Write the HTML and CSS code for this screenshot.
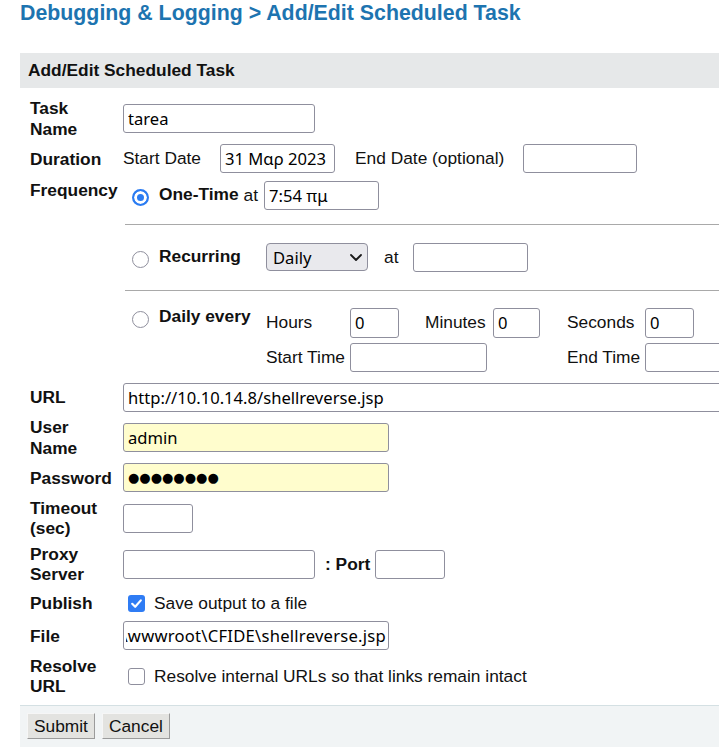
FILE: index.html
```html
<!DOCTYPE html>
<html lang="en">
<head>
<meta charset="utf-8">
<title>Add/Edit Scheduled Task</title>
<link rel="stylesheet" href="styles.css">
</head>
<body>
<div class="page">
  <h1 class="title">Debugging &amp; Logging &gt; Add/Edit Scheduled Task</h1>
  <div class="panel">
    <div class="panel-head">Add/Edit Scheduled Task</div>
    <form class="form">
      <div class="lbl">Task<br>Name</div>
      <div class="fld"><input class="in w192" type="text" value="tarea"></div>

      <div class="lbl">Duration</div>
      <div class="fld">
        <span>Start Date</span>
        <input class="in w115 ml19" type="text" value="31 Μαρ 2023">
        <span class="ml20">End Date (optional)</span>
        <input class="in w114 ml19" type="text" value="">
      </div>

      <div class="lbl top">Frequency</div>
      <div class="freq">
        <div class="onetime">
          <span class="opt"><input class="rd" type="radio" name="freq" checked><b>One-Time</b></span>
          <span class="ml5">at</span>
          <input class="in w115 ml6" type="text" value="7:54 πμ">
        </div>
        <div class="rule"></div>
        <div class="opt mid"><input class="rd" type="radio" name="freq"><b>Recurring</b></div>
        <div class="rec">
          <span class="sel">
            <select class="select"><option>Daily</option><option>Weekly</option><option>Monthly</option></select>
            <svg class="chev" viewBox="0 0 12 7" width="12" height="7"><path d="M1 1 L6 6 L11 1" fill="none" stroke="#1a1a1a" stroke-width="1.8" stroke-linecap="round" stroke-linejoin="round"/></svg>
          </span>
          <span class="ml16">at</span>
          <input class="in w115 ml15" type="text" value="">
        </div>
        <div class="rule r2"></div>
        <div class="opt first"><input class="rd" type="radio" name="freq"><b>Daily every</b></div>
        <div class="daily">
          <span>Hours</span>
          <input class="in w49" type="text" value="0">
          <span>Minutes</span>
          <input class="in w47" type="text" value="0">
          <span>Seconds</span>
          <input class="in w49" type="text" value="0">
          <span>Start Time</span>
          <input class="in w137 span3" type="text" value="">
          <span>End Time</span>
          <input class="in w140" type="text" value="">
        </div>
      </div>

      <div class="lbl">URL</div>
      <div class="fld"><input class="in w650" type="text" value="http://10.10.14.8/shellreverse.jsp"></div>

      <div class="lbl">User<br>Name</div>
      <div class="fld"><input class="in w266 yel" type="text" value="admin"></div>

      <div class="lbl">Password</div>
      <div class="fld"><input class="in w266 yel dots" type="text" value="●●●●●●●●"></div>

      <div class="lbl">Timeout<br>(sec)</div>
      <div class="fld"><input class="in w70" type="text" value=""></div>

      <div class="lbl">Proxy<br>Server</div>
      <div class="fld">
        <input class="in w192" type="text" value="">
        <b class="ml10">: Port</b>
        <input class="in w70 ml5" type="text" value="">
      </div>

      <div class="lbl">Publish</div>
      <div class="fld chk">
        <span class="cb on"><svg viewBox="0 0 17 17" width="17" height="17"><path d="M4.2 8.8 L7.2 11.8 L12.8 5.4" fill="none" stroke="#fff" stroke-width="2.2" stroke-linecap="round" stroke-linejoin="round"/></svg></span>
        <span class="ml9">Save output to a file</span>
      </div>

      <div class="lbl">File</div>
      <div class="fld"><input class="in w266 rtl" type="text" value="C:\ColdFusion8\wwwroot\CFIDE\shellreverse.jsp"></div>

      <div class="lbl">Resolve<br>URL</div>
      <div class="fld">
        <span class="cb"></span>
        <span class="ml9">Resolve internal URLs so that links remain intact</span>
      </div>
    </form>
    <div class="panel-foot">
      <button class="btn" type="button">Submit</button>
      <button class="btn" type="button">Cancel</button>
    </div>
  </div>
</div>
</body>
</html>
```
FILE: styles.css
```css
html, body {
  margin: 0;
  padding: 0;
  overflow: hidden;
  background: #fff;
}

body {
  font-family: "Liberation Sans", Arial, sans-serif;
  font-size: 17.33px;
  color: #111;
}

.page {
  width: 800px;
  padding-left: 20px;
}

.title {
  margin: 1px 0 0;
  font-size: 21.33px;
  line-height: 24px;
  font-weight: bold;
  color: #1d74b0;
}

.panel {
  margin-top: 28px;
  width: 780px;
}

.panel-head {
  height: 35px;
  line-height: 35px;
  padding-left: 8px;
  background: #e6e8e9;
  font-weight: bold;
}

.form {
  display: grid;
  grid-template-columns: 93px 1fr;
  row-gap: 5.25px;
  padding: 10px 0 8.5px 10px;
}

.lbl {
  font-weight: bold;
  line-height: 20.5px;
  align-self: center;
}

.lbl.top {
  align-self: start;
  margin-top: 1.5px;
}

.fld {
  display: flex;
  align-items: center;
  min-height: 29px;
  white-space: nowrap;
}

.fld.chk {
  min-height: 26px;
}

.in {
  box-sizing: border-box;
  height: 29px;
  padding: 0 4px;
  border: 1px solid #8f8f9d;
  border-radius: 3px;
  background: #fff;
  color: #000;
  font-family: "Noto Sans", sans-serif;
  font-size: 16.6px;
  outline: none;
}

.yel { background: #fffdcd; }
.dots { font-family: "DejaVu Sans", sans-serif; font-size: 13px; }
.rtl { direction: rtl; text-align: left; padding: 0 2px; letter-spacing: 0.25px; }

.w47 { width: 47px; }
.w49 { width: 49px; }
.w70 { width: 70px; }
.w114 { width: 114px; }
.w115 { width: 115px; }
.w137 { width: 137px; }
.w140 { width: 140px; }
.w192 { width: 192px; }
.w266 { width: 266px; }
.w650 { width: 650px; }

.ml5 { margin-left: 5px; }
.ml6 { margin-left: 6px; }
.ml9 { margin-left: 9px; }
.ml10 { margin-left: 10px; }
.ml15 { margin-left: 15px; }
.ml16 { margin-left: 16px; }
.ml19 { margin-left: 19px; }
.ml20 { margin-left: 20px; }

/* Frequency block */
.freq {
  display: grid;
  grid-template-columns: 143px 1fr;
  padding: 2px 0 6px;
}

.onetime {
  grid-column: 1 / -1;
  display: flex;
  align-items: center;
  height: 29px;
  white-space: nowrap;
}

.rule {
  grid-column: 1 / -1;
  height: 0;
  margin: 14px 0 18px 2px;
  border-top: 1px solid #a9a9a9;
}

.rule.r2 {
  margin-top: 18px;
  margin-bottom: 15px;
}

.opt {
  display: flex;
  align-items: flex-start;
  padding-left: 9px;
  line-height: 20.5px;
  white-space: nowrap;
}

.opt.mid { align-self: center; }
.opt.first { align-self: start; }

.rd {
  appearance: none;
  -webkit-appearance: none;
  box-sizing: border-box;
  width: 17px;
  height: 17px;
  margin: 5px 10px 0 0;
  border: 1.5px solid #8f8f9d;
  border-radius: 50%;
  background: #fff;
  flex: none;
}

.rd:checked {
  border: 2.5px solid #2b7cf2;
  background: #2b7cf2;
  box-shadow: inset 0 0 0 3px #fff;
}

.rec {
  display: flex;
  align-items: center;
  height: 29px;
  white-space: nowrap;
}

.sel {
  position: relative;
  display: inline-block;
  height: 28px;
}

.select {
  appearance: none;
  -webkit-appearance: none;
  box-sizing: border-box;
  width: 102px;
  height: 28px;
  margin: 0;
  padding: 0 6px;
  border: 1px solid #8f8f9d;
  border-radius: 4px;
  background: #e9e9ed;
  color: #000;
  font-family: "Noto Sans", sans-serif;
  font-size: 16.6px;
}

.chev {
  position: absolute;
  right: 6px;
  top: 11px;
  pointer-events: none;
}

.daily {
  display: grid;
  grid-template-columns: 84px 75px 68px 74px 78px 200px;
  row-gap: 5px;
  align-items: center;
  padding-top: 2px;
  white-space: nowrap;
}

.daily .in { justify-self: start; }
.daily .in.w49, .daily .in.w47 { height: 30px; }
.daily .span3 { grid-column: 2 / span 3; }

/* Checkboxes */
.cb {
  box-sizing: border-box;
  display: inline-block;
  width: 17px;
  height: 17px;
  margin-left: 5px;
  border: 1.5px solid #8f8f9d;
  border-radius: 3px;
  background: #fff;
  flex: none;
}

.cb.on {
  border: none;
  background: #2f7cf4;
}

.cb svg { display: block; }

/* Footer */
.panel-foot {
  display: flex;
  gap: 7px;
  padding: 7px 7px 8px;
  border-top: 1px solid #d4e0e3;
  background: #f1f4f5;
}

.btn {
  box-sizing: border-box;
  height: 26px;
  padding: 0 6px;
  border: 1px solid;
  border-color: #f6f6f6 #9b9b9b #9b9b9b #f6f6f6;
  border-radius: 0;
  background: #e3e3e0;
  color: #111;
  font-family: "Liberation Sans", Arial, sans-serif;
  font-size: 17.33px;
}
```
